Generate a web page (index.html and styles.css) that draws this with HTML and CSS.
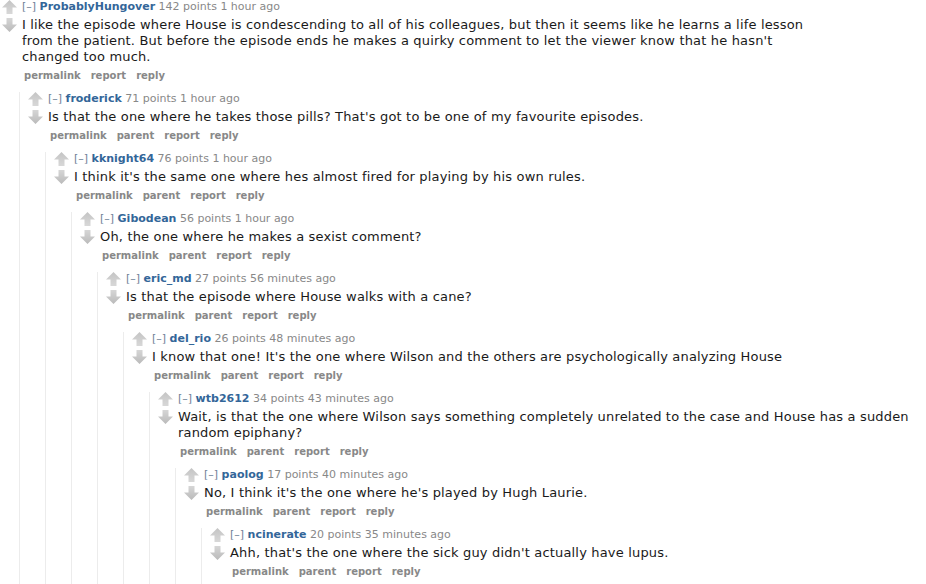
FILE: index.html
```html
<!DOCTYPE html>
<html>
<head>
<meta charset="utf-8">
<link rel="stylesheet" href="styles.css">
</head>
<body>
<svg class="defs" width="0" height="0">
  <defs>
    <linearGradient id="gu" x1="0" y1="0" x2="0" y2="1">
      <stop offset="0" stop-color="#c4c4c4"/>
      <stop offset="1" stop-color="#d8d8d8"/>
    </linearGradient>
    <linearGradient id="gd" x1="0" y1="0" x2="0" y2="1">
      <stop offset="0" stop-color="#d6d6d6"/>
      <stop offset="1" stop-color="#bababa"/>
    </linearGradient>
    <symbol id="up" viewBox="0 0 15 14"><path d="M7.5 0 L15 7.5 L10.5 7.5 L10.5 14 L4.5 14 L4.5 7.5 L0 7.5 Z" fill="url(#gu)"/></symbol>
    <symbol id="down" viewBox="0 0 15 14"><path d="M4.5 0 L10.5 0 L10.5 6.5 L15 6.5 L7.5 14 L0 6.5 L4.5 6.5 Z" fill="url(#gd)"/></symbol>
  </defs>
</svg>

<div class="comment">
  <div class="row">
    <div class="midcol"><svg class="arrow"><use href="#up"/></svg><svg class="arrow"><use href="#down"/></svg></div>
    <div class="entry">
      <p class="tagline"><span class="expand">[–]</span> <span class="author">ProbablyHungover</span> 142 points 1 hour ago</p>
      <div class="md">I like the episode where House is condescending to all of his colleagues, but then it seems like he learns a life lesson from the patient. But before the episode ends he makes a quirky comment to let the viewer know that he hasn't changed too much.</div>
      <ul class="buttons"><li>permalink</li><li>report</li><li>reply</li></ul>
    </div>
  </div>
  <div class="children">
    <div class="comment">
      <div class="row">
        <div class="midcol"><svg class="arrow"><use href="#up"/></svg><svg class="arrow"><use href="#down"/></svg></div>
        <div class="entry">
          <p class="tagline"><span class="expand">[–]</span> <span class="author">froderick</span> 71 points 1 hour ago</p>
          <div class="md">Is that the one where he takes those pills? That's got to be one of my favourite episodes.</div>
          <ul class="buttons"><li>permalink</li><li>parent</li><li>report</li><li>reply</li></ul>
        </div>
      </div>
      <div class="children">
        <div class="comment">
          <div class="row">
            <div class="midcol"><svg class="arrow"><use href="#up"/></svg><svg class="arrow"><use href="#down"/></svg></div>
            <div class="entry">
              <p class="tagline"><span class="expand">[–]</span> <span class="author">kknight64</span> 76 points 1 hour ago</p>
              <div class="md">I think it's the same one where hes almost fired for playing by his own rules.</div>
              <ul class="buttons"><li>permalink</li><li>parent</li><li>report</li><li>reply</li></ul>
            </div>
          </div>
          <div class="children">
            <div class="comment">
              <div class="row">
                <div class="midcol"><svg class="arrow"><use href="#up"/></svg><svg class="arrow"><use href="#down"/></svg></div>
                <div class="entry">
                  <p class="tagline"><span class="expand">[–]</span> <span class="author">Gibodean</span> 56 points 1 hour ago</p>
                  <div class="md">Oh, the one where he makes a sexist comment?</div>
                  <ul class="buttons"><li>permalink</li><li>parent</li><li>report</li><li>reply</li></ul>
                </div>
              </div>
              <div class="children">
                <div class="comment">
                  <div class="row">
                    <div class="midcol"><svg class="arrow"><use href="#up"/></svg><svg class="arrow"><use href="#down"/></svg></div>
                    <div class="entry">
                      <p class="tagline"><span class="expand">[–]</span> <span class="author">eric_md</span> 27 points 56 minutes ago</p>
                      <div class="md">Is that the episode where House walks with a cane?</div>
                      <ul class="buttons"><li>permalink</li><li>parent</li><li>report</li><li>reply</li></ul>
                    </div>
                  </div>
                  <div class="children">
                    <div class="comment">
                      <div class="row">
                        <div class="midcol"><svg class="arrow"><use href="#up"/></svg><svg class="arrow"><use href="#down"/></svg></div>
                        <div class="entry">
                          <p class="tagline"><span class="expand">[–]</span> <span class="author">del_rio</span> 26 points 48 minutes ago</p>
                          <div class="md">I know that one! It's the one where Wilson and the others are psychologically analyzing House</div>
                          <ul class="buttons"><li>permalink</li><li>parent</li><li>report</li><li>reply</li></ul>
                        </div>
                      </div>
                      <div class="children">
                        <div class="comment">
                          <div class="row">
                            <div class="midcol"><svg class="arrow"><use href="#up"/></svg><svg class="arrow"><use href="#down"/></svg></div>
                            <div class="entry">
                              <p class="tagline"><span class="expand">[–]</span> <span class="author">wtb2612</span> 34 points 43 minutes ago</p>
                              <div class="md">Wait, is that the one where Wilson says something completely unrelated to the case and House has a sudden random epiphany?</div>
                              <ul class="buttons"><li>permalink</li><li>parent</li><li>report</li><li>reply</li></ul>
                            </div>
                          </div>
                          <div class="children">
                            <div class="comment">
                              <div class="row">
                                <div class="midcol"><svg class="arrow"><use href="#up"/></svg><svg class="arrow"><use href="#down"/></svg></div>
                                <div class="entry">
                                  <p class="tagline"><span class="expand">[–]</span> <span class="author">paolog</span> 17 points 40 minutes ago</p>
                                  <div class="md">No, I think it's the one where he's played by Hugh Laurie.</div>
                                  <ul class="buttons"><li>permalink</li><li>parent</li><li>report</li><li>reply</li></ul>
                                </div>
                              </div>
                              <div class="children">
                                <div class="comment">
                                  <div class="row">
                                    <div class="midcol"><svg class="arrow"><use href="#up"/></svg><svg class="arrow"><use href="#down"/></svg></div>
                                    <div class="entry">
                                      <p class="tagline"><span class="expand">[–]</span> <span class="author">ncinerate</span> 20 points 35 minutes ago</p>
                                      <div class="md">Ahh, that's the one where the sick guy didn't actually have lupus.</div>
                                      <ul class="buttons"><li>permalink</li><li>parent</li><li>report</li><li>reply</li></ul>
                                    </div>
                                  </div>
                                  <div class="children"></div>
                                </div>
                              </div>
                            </div>
                          </div>
                        </div>
                      </div>
                    </div>
                  </div>
                </div>
              </div>
            </div>
          </div>
        </div>
      </div>
    </div>
  </div>
</div>
</body>
</html>
```

FILE: styles.css
```css
html, body {
  margin: 0;
  padding: 0;
  background: #ffffff;
  overflow: hidden;
}
body {
  font-family: "DejaVu Sans", Verdana, sans-serif;
  color: #222;
  height: 584px;
}
.defs {
  position: absolute;
  width: 0;
  height: 0;
}
.row {
  display: flex;
  align-items: flex-start;
}
.midcol {
  flex: 0 0 15px;
  width: 15px;
  margin-left: 2px;
  margin-right: 5px;
  display: flex;
  flex-direction: column;
  gap: 4px;
}
.arrow {
  display: block;
  width: 15px;
  height: 14px;
}
.entry {
  flex: 1 1 auto;
  min-width: 0;
}
.tagline {
  margin: 0;
  font-size: 11px;
  line-height: 13px;
  color: #888;
  white-space: nowrap;
}
.expand {
  color: #6f8197;
}
.author {
  color: #369;
  font-weight: bold;
}
.md {
  margin-top: 4px;
  font-size: 13px;
  line-height: 16px;
  letter-spacing: 0.17px;
  color: #1a1a1a;
  max-width: 800px;
}
.buttons {
  list-style: none;
  margin: 5px 0 0;
  padding: 0 0 0 2px;
  display: flex;
  gap: 10px;
  font-size: 10px;
  line-height: 12px;
  font-weight: bold;
  color: #888;
}
.children {
  margin-top: 10px;
  margin-left: 19px;
  padding-left: 6px;
  border-left: 1px solid #ececec;
  min-height: 600px;
}
.children:empty {
  min-height: 40px;
}
```
